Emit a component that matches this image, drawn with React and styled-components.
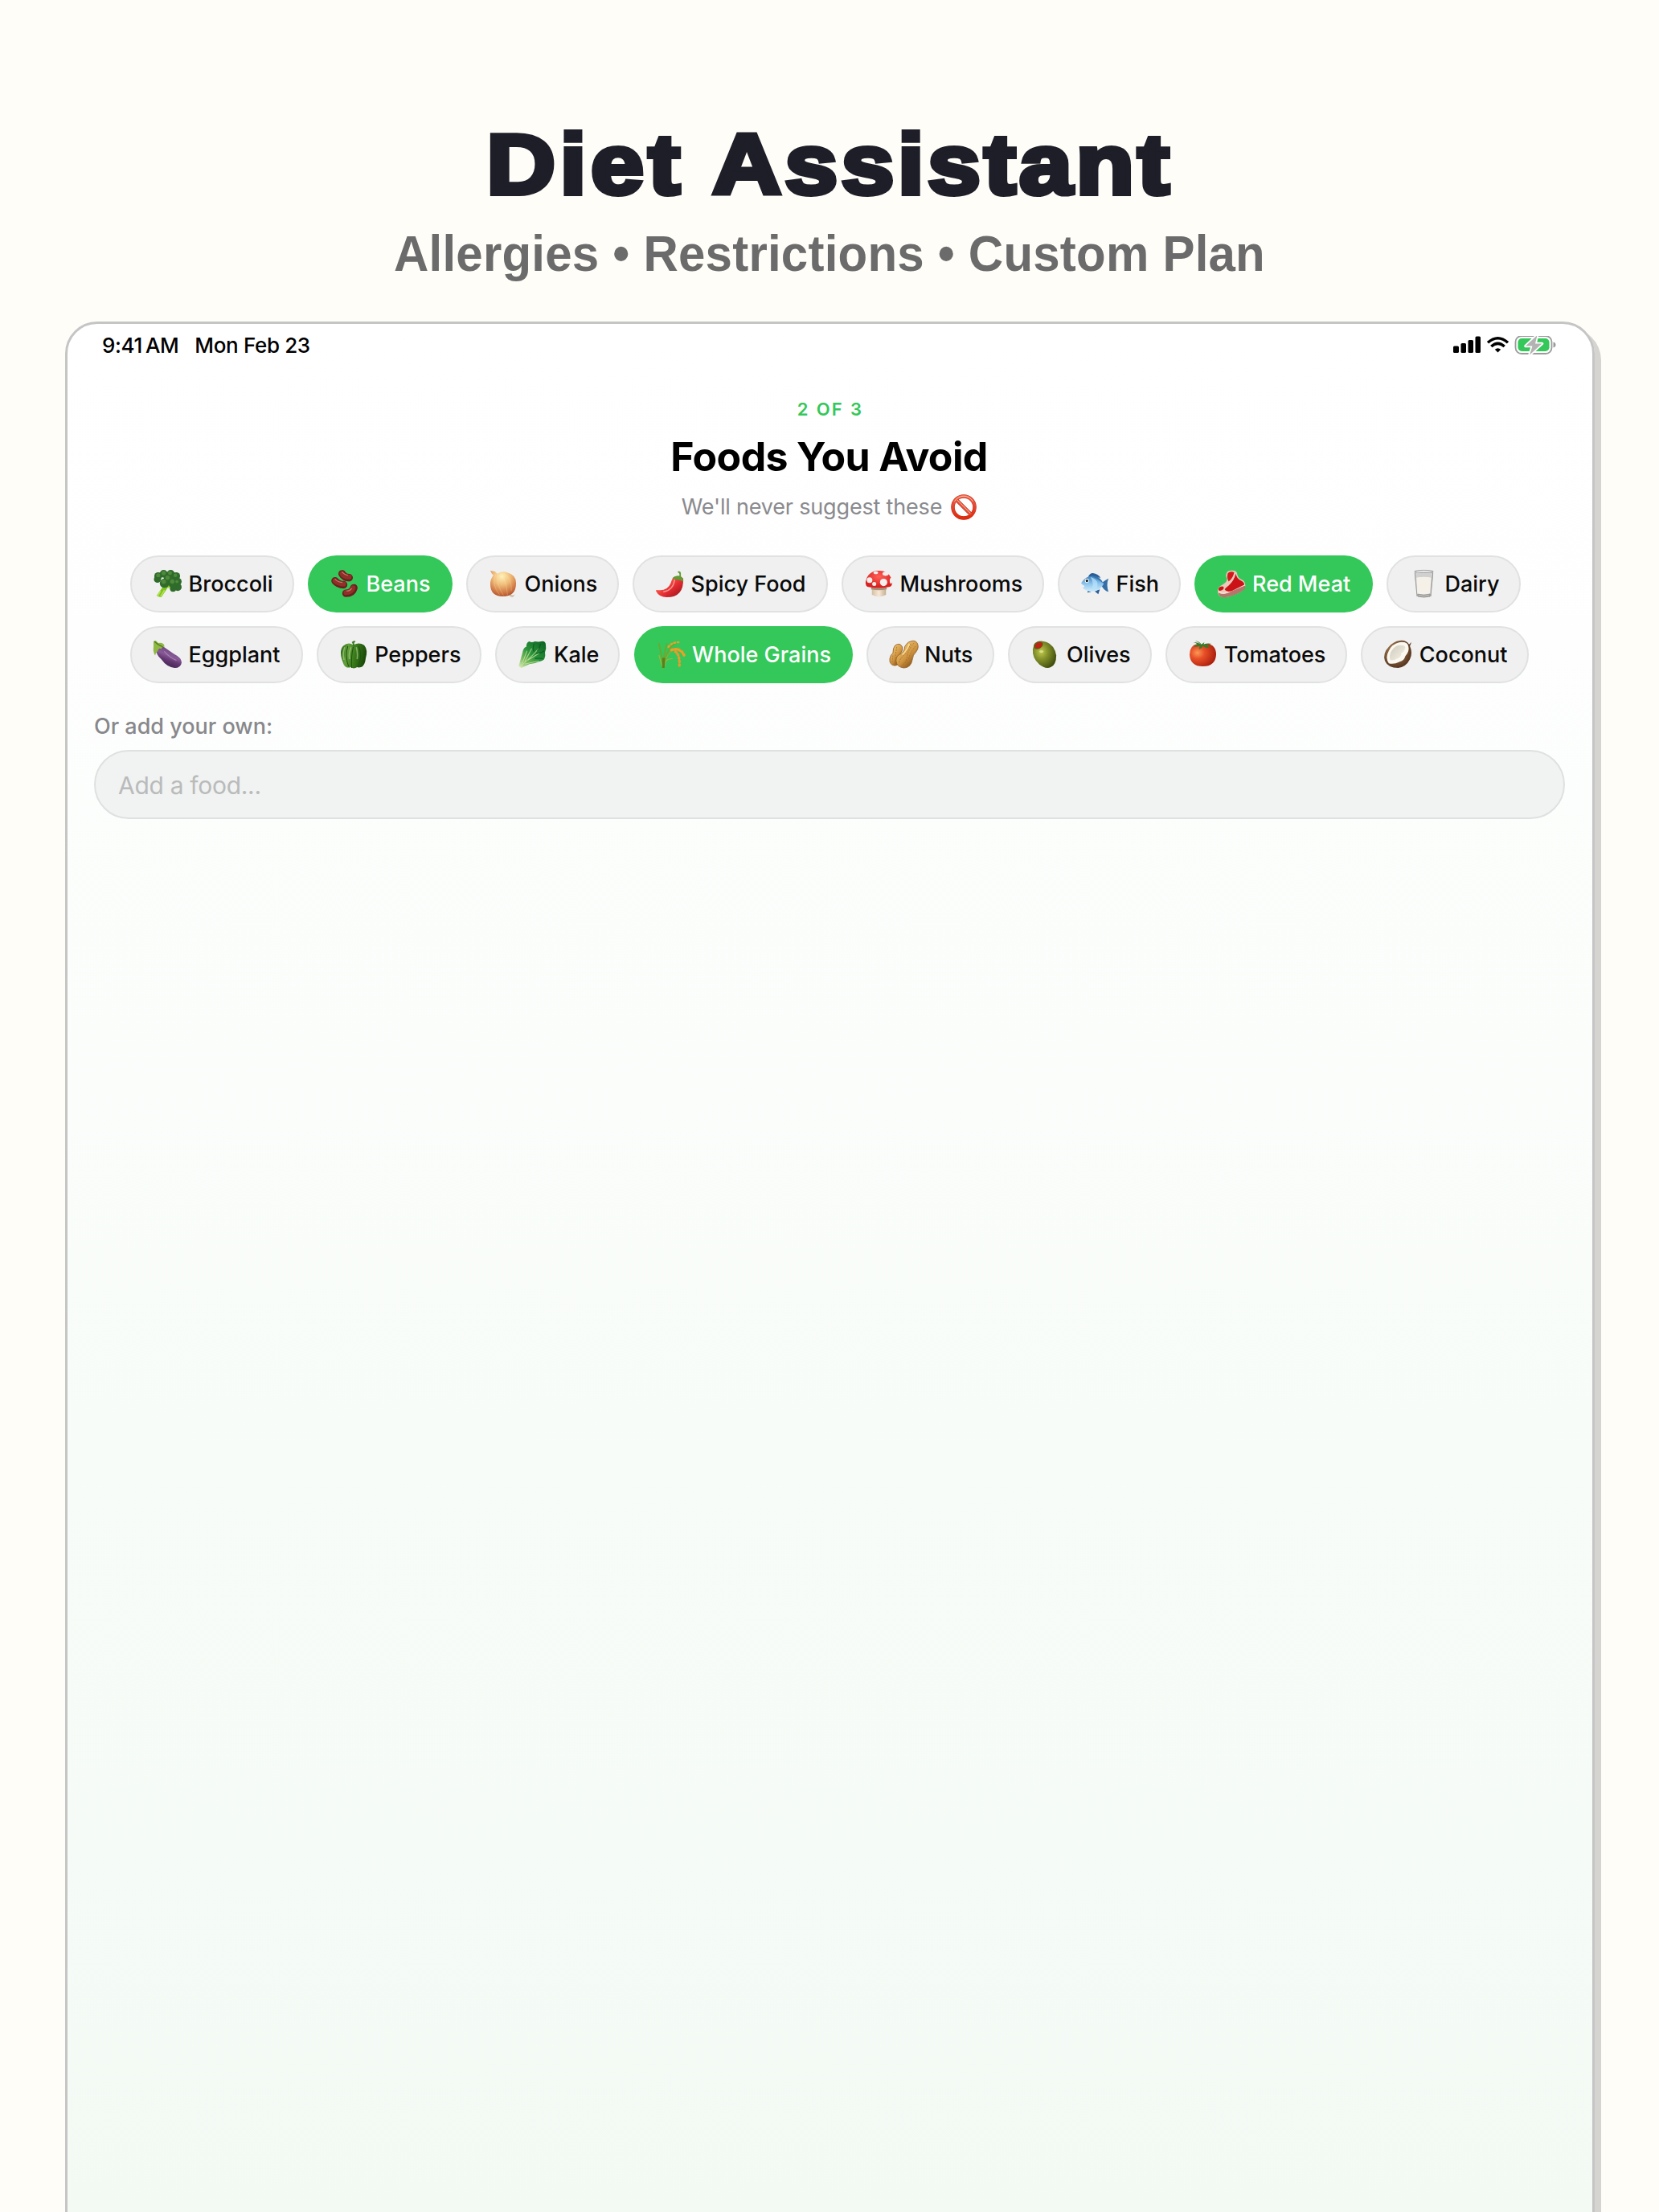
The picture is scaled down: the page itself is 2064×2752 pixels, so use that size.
import React from "react";
import styled, { createGlobalStyle } from "styled-components";

const GlobalStyle = createGlobalStyle`
  * { box-sizing: border-box; }
  html, body { margin: 0; padding: 0; }
  body {
    background: #fffdf8;
    font-family: Inter, "Liberation Sans", sans-serif;
    overflow: hidden;
  }
`;

const Page = styled.main`
  display: flex;
  flex-direction: column;
  align-items: center;
  width: 2064px;
  height: 2752px;
  overflow: hidden;
  background: #fffdf8;
`;

const Hero = styled.header`
  display: flex;
  flex-direction: column;
  align-items: center;
  height: 400px;
  padding-top: 139px;
  flex: none;
`;

const HeroTitle = styled.h1`
  display: flex;
  gap: 31px;
  margin: 0;
  height: 130px;
  font: 700 106px/130px "Liberation Sans", Arial, sans-serif;
  white-space: nowrap;
  color: #1e1e28;
  -webkit-text-stroke: 6px #1e1e28;
  transform: scaleX(1.12);
`;

const HeroWord = styled.span`
  letter-spacing: ${(p) => p.$track}px;
`;

const HeroSubtitle = styled.p`
  margin: 11px 0 0;
  font: 700 60px/72px "Liberation Sans", Arial, sans-serif;
  letter-spacing: 0.22px;
  white-space: nowrap;
  color: #6b6b6b;
  transform: scaleY(1.04);
`;

const Screen = styled.section`
  display: flex;
  flex-direction: column;
  width: 1903px;
  height: 2500px;
  flex: none;
  margin-left: 1px;
  border: 3px solid #c5c5c5;
  border-radius: 40px;
  background: linear-gradient(#ffffff 0, #f3faf4 2349px);
  box-shadow: 8px 8px 0 #d5d4d0;
`;

const StatusBar = styled.div`
  display: flex;
  align-items: center;
  height: 53px;
  padding: 0 45px 0 43px;
`;

const StatusText = styled.span`
  font-size: 26px;
  font-weight: 480;
  line-height: 53px;
  white-space: pre;
  color: #000;
  letter-spacing: ${(p) => p.$track}px;
  margin-right: ${(p) => p.$gap || 0}px;
`;

const StatusIcons = styled.svg`
  margin: 2px 0 0 auto;
  width: 128px;
  height: 26px;
`;

const Heading = styled.div`
  display: flex;
  flex-direction: column;
  align-items: center;
  height: 235px;
  padding-top: 37px;
`;

const Step = styled.div`
  font-size: 22px;
  font-weight: 590;
  line-height: 32px;
  letter-spacing: 2.3px;
  margin-right: -1px;
  color: #34c759;
`;

const Title = styled.h2`
  margin: 13px 2px 0 0;
  font-size: 50px;
  font-weight: 700;
  line-height: 60px;
  letter-spacing: -0.65px;
  color: #000;
`;

const Hint = styled.p`
  display: flex;
  align-items: center;
  gap: 11px;
  margin: 15px 2px 0 0;
  font-size: 27px;
  font-weight: 400;
  line-height: 36px;
  letter-spacing: -0.18px;
  color: #8a8a8e;
`;

const Chips = styled.div`
  display: flex;
  flex-direction: column;
  gap: 18px;
  padding-left: 78px;
`;

const ChipRow = styled.div`
  display: flex;
  gap: ${(p) => p.$gap}px;
  height: 70px;
`;

const Chip = styled.button`
  display: flex;
  align-items: center;
  gap: 8.5px;
  width: ${(p) => p.$width}px;
  height: 71px;
  padding: 0 0 0 ${(p) => (p.$on ? 29 : 27)}px;
  flex: none;
  border: ${(p) => (p.$on ? "0" : "2px solid #e0e1e1")};
  border-radius: 36px;
  background: ${(p) => (p.$on ? "#34c759" : "#f0f0f0")};
  color: ${(p) => (p.$on ? "#fff" : "#0a0a0a")};
  font: 480 27px/36px Inter, "Liberation Sans", sans-serif;
  letter-spacing: 0;
  white-space: nowrap;
`;

const Emoji = styled.svg`
  width: ${(p) => p.$size || 35}px;
  height: ${(p) => p.$size || 35}px;
  flex: none;
  overflow: visible;
`;

const CustomFood = styled.label`
  display: flex;
  flex-direction: column;
  padding: 36px 34px 0 33px;
  font-size: 27px;
  font-weight: 460;
  line-height: 38px;
  color: #88888c;
`;

const LabelText = styled.span`
  letter-spacing: 0;
`;

const FoodInput = styled.input`
  width: 100%;
  height: 86px;
  margin-top: 10px;
  padding: 1px 28px 0;
  border: 2px solid #dfe1e1;
  border-radius: 43px;
  background: #f1f2f2;
  font: 400 30px/40px Inter, "Liberation Sans", sans-serif;
  letter-spacing: -0.3px;
  outline: none;
  &::placeholder { color: #b9bbbb; opacity: 1; }
`;

const art = {
  broccoli: (
    <>
      <path d="M13 20 4 33q3 2 6 2l8-12 8 1-6-8z" fill="#7fc41c" />
      <path d="M9 27 5 34M14 26l-5 8M19 22l6 2" stroke="#b7e35a" strokeWidth="1.6" fill="none" />
      <g fill="#2f6b2b">
        <circle cx="6" cy="8" r="5" /><circle cx="5" cy="12" r="4.5" /><circle cx="13" cy="5" r="5" />
        <circle cx="22" cy="5" r="5" /><circle cx="29" cy="8" r="5" /><circle cx="31" cy="15" r="5" />
        <circle cx="31" cy="22" r="5" /><circle cx="25" cy="24" r="4" /><circle cx="20" cy="12" r="7" />
        <circle cx="14" cy="17" r="6" /><circle cx="25" cy="17" r="6" />
      </g>
      <g fill="#5a9440" opacity=".75">
        <circle cx="6" cy="7" r="2.6" /><circle cx="13" cy="4" r="2.7" /><circle cx="21" cy="4" r="2.5" />
        <circle cx="28" cy="7" r="2.3" /><circle cx="18" cy="10" r="2.8" /><circle cx="13" cy="15" r="3" />
        <circle cx="24" cy="15" r="2.8" /><circle cx="30" cy="15" r="2" />
      </g>
    </>
  ),
  beans: (
    <>
      <g fill="none" stroke="#6b1f1c" strokeWidth="9.6" strokeLinecap="round">
        <path d="M14 5q3 5 9 5" /><path d="M5 14q4 5 11 5" /><path d="M19 30q8 0 10-7" />
      </g>
      <g fill="none" stroke="#8f3029" strokeWidth="6.4" strokeLinecap="round">
        <path d="M14 5q3 4 9 4" /><path d="M5 14q4 4 11 4" /><path d="M19 29q7 0 9-6" />
      </g>
      <g fill="none" stroke="#c9776c" strokeWidth="1.2" strokeLinecap="round">
        <path d="M14 3q3 3 7 4" /><path d="M5 12q4 4 9 4" /><path d="M20 27q4 0 6-3" />
      </g>
    </>
  ),
  onion: (
    <>
      <defs>
        <radialGradient id="onion" cx=".45" cy=".22" r=".85">
          <stop offset="0" stopColor="#fff3b8" /><stop offset=".4" stopColor="#f0ba78" />
          <stop offset=".8" stopColor="#c96d3d" /><stop offset="1" stopColor="#9a4322" />
        </radialGradient>
      </defs>
      <path d="M27 32q4 1 6-1l-3 4q-3 0-5-2z" fill="#cdbfa8" />
      <path d="M1 1 7 2l3 3q5-4 12-2 12 3 12 14 0 17-17 17Q1 34 1 18 1 12 5 7L3 5z" fill="url(#onion)" />
      <path d="M8 5q-6 14 5 27M10 5q-1 14 8 28M13 4q9 9 10 28M17 3q12 8 11 24" stroke="#ffe9b0" strokeWidth=".8" fill="none" opacity=".35" />
    </>
  ),
  chili: (
    <>
      <defs>
        <linearGradient id="chili" x1="0" y1="0" x2="1" y2="1">
          <stop offset=".3" stopColor="#ff5a4e" /><stop offset=".6" stopColor="#e02a30" /><stop offset="1" stopColor="#8f1118" />
        </linearGradient>
      </defs>
      <path d="M22 10q8-5 13 1 1 24-21 24Q4 35 0 27q0-2 3-1 12 1 16-9 1-4 3-7z" fill="url(#chili)" />
      <path d="M24 13q-2 13-14 15" stroke="#ffb0a8" strokeWidth="1.4" strokeLinecap="round" fill="none" opacity=".8" />
      <path d="M28 2q4-1 4 3v4q4 2 3 6l-5-2-5-1-4-1q3-4 9-3 1-4-2-5z" fill="#5f9c34" />
    </>
  ),
  mushroom: (
    <>
      <defs>
        <linearGradient id="stem" x1="0" x2="1">
          <stop offset="0" stopColor="#d4bfa5" /><stop offset=".5" stopColor="#f7e9d7" /><stop offset="1" stopColor="#c6ad91" />
        </linearGradient>
        <radialGradient id="cap" cx=".5" cy=".35" r=".6">
          <stop offset="0" stopColor="#ff6257" /><stop offset="1" stopColor="#d91f1f" />
        </radialGradient>
      </defs>
      <path d="M9 21h18v11q-9 5-18 0z" fill="url(#stem)" />
      <path d="M8 22h20v3q-10 2-20 0z" fill="#a98f78" />
      <path d="M1 15Q4 1 18 1t17 14q1 7-6 7-11 2-23 0-6 0-5-7z" fill="url(#cap)" />
      <g fill="#f3efec">
        <circle cx="6" cy="13" r="3.6" /><circle cx="24" cy="16" r="4.7" /><ellipse cx="26.500" cy="5" rx="4" ry="2.600" />
        <ellipse cx="14" cy="3.500" rx="3" ry="1.800" /><circle cx="12" cy="18" r="2.600" /><ellipse cx="33.500" cy="14" rx="1.700" ry="3.800" />
      </g>
    </>
  ),
  fish: (
    <>
      <defs>
        <linearGradient id="fish" x1="0" y1="0" x2="0" y2="1">
          <stop offset="0" stopColor="#3e7fba" /><stop offset=".5" stopColor="#8cc5ee" /><stop offset="1" stopColor="#d7eefb" />
        </linearGradient>
      </defs>
      <path d="M9 9q2-5 6-5 7 1 10 6zM17 27l5 4 2-6zM9 26l-1 3 5-1z" fill="#2a5f96" />
      <path d="M26 17q5-4 9-6-3 8 0 17-5-1-9-8z" fill="#356ea5" />
      <path d="M0 17Q7 6 18 8q7 2 11 10-5 9-14 10Q6 28 2 23q3-1 2-3-2 0-4-3z" fill="url(#fish)" />
      <path d="M12 9q6 9 0 18 10 0 9-9 0-6-9-9z" fill="#b8e3fa" opacity=".75" />
      <path d="M14 8q10-1 14 9-6-5-14-9z" fill="#2e6fa9" opacity=".8" />
      <circle cx="7.500" cy="14" r="2.600" fill="#fff" /><circle cx="7.500" cy="14" r="1.600" fill="#111" />
    </>
  ),
  meat: (
    <>
      <path d="M11 5q1-4 5-4 9-1 9 5 1 5 7 7 4 3 3 9-3 6-12 9Q9 37 3 34q-3-2-3-8 1-5 6-7 6-3 6-8-2-3-1-6z" fill="#ecc9ba" />
      <path d="M1 29q6 4 15-1 11-5 19-8v4q-6 6-16 9-10 4-16 1-2-2-2-5z" fill="#b4766a" />
      <path d="M1 28q6 4 15-1 11-5 19-8" fill="none" stroke="#f7dfd3" strokeWidth="1.500" />
      <path d="M13 4q3-3 8-1-1 7-7 12-3-6-1-11z" fill="#d3181b" />
      <path d="M23 5q1 6 7 9 4 2 4 5-8 4-16 8-7 2-9-2 1-2 5-5 7-6 9-15z" fill="#cb1216" />
      <path d="M1 24q1-3 5-3 3 1 1 4-4 3-6 1z" fill="#c91517" />
    </>
  ),
  milk: (
    <>
      <defs>
        <linearGradient id="glass" x1="0" x2="1">
          <stop offset="0" stopColor="#aaaaa8" /><stop offset=".18" stopColor="#f6f5f1" />
          <stop offset=".75" stopColor="#eeece6" /><stop offset="1" stopColor="#a3a3a2" />
        </linearGradient>
      </defs>
      <path d="M6 2h24l-3 32q-9 3-18 0z" fill="url(#glass)" />
      <path d="M7 4h22l-.5 6h-21z" fill="#cfd0cf" />
      <ellipse cx="18" cy="2" rx="12" ry="1.600" fill="#e6e6e6" stroke="#8f9090" strokeWidth=".8" />
      <path d="M8.500 10q9.500-2 19 0l-2 20h-15z" fill="#f5f1e8" />
      <path d="M10 31q8 2 16 0l-.3 3q-8 2-15.400 0z" fill="#b7b8b6" stroke="#777" strokeWidth=".7" />
      <path d="m6.500 4 2.800 30M29.500 4l-2.800 30" stroke="#989997" strokeWidth="1" />
    </>
  ),
  eggplant: (
    <>
      <defs>
        <linearGradient id="eggplant" x1=".75" y1="0" x2=".3" y2="1">
          <stop offset=".1" stopColor="#65407a" /><stop offset=".45" stopColor="#885a97" />
          <stop offset=".65" stopColor="#633772" /><stop offset="1" stopColor="#381f47" />
        </linearGradient>
      </defs>
      <path d="M3 10q5-6 10-2l13 9q10 5 10 11-1 7-9 7-10-1-17-11-7-6-7-14z" fill="url(#eggplant)" />
      <path d="M14 14q8 9 15 11" stroke="#c49fce" strokeWidth="1.300" strokeLinecap="round" fill="none" opacity=".55" />
      <path d="M0 1 3 0l3 3q8-1 8 5-4 0-4 3-3-3-5 3-2 1-3 5-3-5-2-11z" fill="#8fb944" />
      <path d="m1 1 5 4 6 3" stroke="#547c22" strokeWidth="1.500" fill="none" />
    </>
  ),
  pepper: (
    <>
      <defs>
        <linearGradient id="pepper" x1="0" y1="0" x2="1" y2=".2">
          <stop offset="0" stopColor="#25610f" /><stop offset=".3" stopColor="#65a03c" />
          <stop offset=".6" stopColor="#3b7c1b" /><stop offset="1" stopColor="#1c4c0b" />
        </linearGradient>
      </defs>
      <path d="M4 7q7-6 13-1 7-5 14 0 5 6 2 16-1 10-6 12-3 1-5 0-5 3-8 0-6 2-9-3-4-9-4-15 0-6 3-9z" fill="url(#pepper)" />
      <path d="M10 7Q6 20 11 33M17 8q-3 12-2 27M24 7q5 13-1 27" stroke="#1d560e" strokeWidth="1.100" fill="none" />
      <path d="M6 9q-3 7-1 15M14 9q-3 8-2 14M21 9q2 8 1 14" stroke="#b3d896" strokeWidth="1.700" strokeLinecap="round" fill="none" opacity=".6" />
      <path d="M16 8q1-4-1-6 3-3 5-1l-2 2q0 3 3 5z" fill="#3c7a26" />
    </>
  ),
  kale: (
    <>
      <defs>
        <linearGradient id="kale" x1="1" y1="0" x2="0" y2="1">
          <stop offset="0" stopColor="#08601f" /><stop offset=".5" stopColor="#2a933b" /><stop offset=".75" stopColor="#7dbb62" /><stop offset="1" stopColor="#e9f2c9" />
        </linearGradient>
      </defs>
      <path d="m1 30 4-14q1-7 5-8 0-6 4-7 3 2 7 0 5 1 8 0 6-1 6 5 1 5-1 9 1 5-1 9-3 3-7 3-6 3-12 3L4 35q-2 0-4-3z" fill="url(#kale)" />
      <path d="M2 33Q15 23 26 10M5 29l6-16M8 27l9-17M12 25l15-9M8 30l18-4" stroke="#c6e59e" strokeWidth="1.100" fill="none" opacity=".8" />
      <path d="M20 4q-2 6 0 10M28 4q0 5-4 9M33 13q-5 4-10 3M31 23q-5-1-10 0" stroke="#064c18" strokeWidth="1.300" fill="none" opacity=".6" />
    </>
  ),
  grain: (
    <>
      <g fill="none" strokeLinecap="round">
        <path d="M7 35Q6 20 2 4M7 35Q8 16 12 4M8 34Q10 13 22 4" stroke="#75a52a" strokeWidth="1.700" />
        <path d="M7 35Q4 27 2 19M9 33q0-10 10-10" stroke="#96b83d" strokeWidth="1.300" />
        <path d="M9 28Q14 12 27 9" stroke="#9aa936" strokeWidth="1.300" />
        <path d="M14 8Q19 2 27 2" stroke="#e7a12f" strokeWidth="2.600" strokeDasharray="1.500 3" />
        <path d="M18 12q12-4 17 9" stroke="#ee9f26" strokeWidth="3.600" strokeDasharray="1.500 3" />
        <path d="M23 14q6 5 5 18" stroke="#e59c2d" strokeWidth="3.400" strokeDasharray="1.500 3" />
      </g>
      <path d="M6 22h4l-1 13H6z" fill="#56821c" />
    </>
  ),
  peanut: (
    <>
      <defs>
        <linearGradient id="nut" x1=".1" y1=".1" x2=".8" y2="1">
          <stop offset="0" stopColor="#f3cd7e" /><stop offset=".55" stopColor="#cf9440" /><stop offset="1" stopColor="#74420f" />
        </linearGradient>
      </defs>
      <path d="M7 6q6-4 9 2 1 5-2 8-2 4 0 9-3 7-8 7-7-1-6-9 1-5 4-7 0-7 3-10z" fill="url(#nut)" stroke="#8c581c" strokeWidth=".8" />
      <path d="M24 2q8-4 11 1 3 5-1 11-5 5-5 10-2 11-11 11-9-1-10-9 0-7 6-9 5-3 5-9 2-4 5-6z" fill="url(#nut)" stroke="#8c581c" strokeWidth=".8" />
      <path d="M31 3Q22 14 22 22q-1 7-7 10M27 4q-4 9-9 15-5 4-6 9M33 7q-7 8-9 17M4 19l-1 9M9 8l-2 12v10" stroke="#9b6424" strokeWidth="1" strokeDasharray="2 1.300" fill="none" opacity=".7" />
      <path d="M25 4q-3 9-9 14" stroke="#ffe29b" strokeWidth="1.800" fill="none" opacity=".8" />
    </>
  ),
  olive: (
    <>
      <defs>
        <radialGradient id="olive" cx=".36" cy=".4" r=".7">
          <stop offset="0" stopColor="#c0c94a" /><stop offset=".4" stopColor="#85922b" /><stop offset="1" stopColor="#3e4b0d" />
        </radialGradient>
      </defs>
      <path d="M4 4q6-6 16-2 10 4 12 17 0 12-7 15-7 3-15-4Q1 22 2 11z" fill="url(#olive)" />
      <ellipse cx="9" cy="6" rx="6.400" ry="4.600" transform="rotate(-30 9 6)" fill="#5b6618" />
      <ellipse cx="9.500" cy="6" rx="5.200" ry="3.600" transform="rotate(-30 9.500 6)" fill="#bb2414" />
      <ellipse cx="13" cy="14" rx="2.800" ry="1.700" fill="#e7edaa" opacity=".65" />
    </>
  ),
  tomato: (
    <>
      <defs>
        <radialGradient id="tomato" cx=".3" cy=".4" r=".75">
          <stop offset="0" stopColor="#f99a57" /><stop offset=".35" stopColor="#e95028" /><stop offset="1" stopColor="#a51a0b" />
        </radialGradient>
      </defs>
      <path d="M11 4q6 2 12 0 12 1 12 14-1 15-17 15T1 18Q1 6 11 4z" fill="url(#tomato)" />
      <path d="M17 6q-4-4-11-4 4 1 5 3-3 0-5 3 5 0 8-1l-1 4q4-1 5-4 4 3 8 2-2-2-3-3 3-1 6-2-6-1-10 1l1-3-4 3Q14 1 8 0q5 2 9 6z" fill="#3b792a" />
    </>
  ),
  coconut: (
    <>
      <defs>
        <radialGradient id="shell" cx=".4" cy=".4" r=".65">
          <stop offset="0" stopColor="#b38a62" /><stop offset="1" stopColor="#50301a" />
        </radialGradient>
        <linearGradient id="flesh" x1="0" y1="0" x2="1" y2="1">
          <stop offset="0" stopColor="#d0cabd" /><stop offset="1" stopColor="#f5f2e7" />
        </linearGradient>
      </defs>
      <path d="M20 0q8-1 12 5l3-3-2 5q4 9 0 17-5 10-15 11Q5 35 1 26-2 16 6 8q6-7 14-8z" fill="url(#shell)" />
      <path d="M20 2q10-1 11 5 2 7-4 13-1 5-7 7-8 4-14 2-5-7 0-16Q10 4 20 2z" fill="#fbf8ef" />
      <path d="M19 6q8-1 8 3-1 5-5 7 0 5-5 7-5 3-9 2-2-5 1-11 4-7 10-8z" fill="url(#flesh)" />
    </>
  ),
  prohibited: (
    <>
      <defs>
        <linearGradient id="ban" x1="0" y1="0" x2="0" y2="1">
          <stop offset="0" stopColor="#f0654c" /><stop offset=".5" stopColor="#e2452f" /><stop offset="1" stopColor="#e52a0b" />
        </linearGradient>
      </defs>
      <circle cx="18" cy="18" r="15.200" fill="none" stroke="#b9260f" strokeWidth="5" />
      <path d="m8 8 20 20" stroke="#b9260f" strokeWidth="5" />
      <circle cx="18" cy="18" r="15.200" fill="none" stroke="url(#ban)" strokeWidth="4" />
      <path d="m8 8 20 20" stroke="#e5573f" strokeWidth="3.800" />
      <path d="M5 10Q10 2.500 18 2.500T31 10M9 8l18 18" fill="none" stroke="#ffc0b0" strokeWidth="1" />
    </>
  ),
};

const rows = [
  {
    gap: 17,
    foods: [
      ["Broccoli", "broccoli", 204], ["Beans", "beans", 180, true], ["Onions", "onion", 190],
      ["Spicy Food", "chili", 243], ["Mushrooms", "mushroom", 252], ["Fish", "fish", 152.5],
      ["Red Meat", "meat", 222.5, true], ["Dairy", "milk", 167],
    ],
  },
  {
    gap: 17.2,
    foods: [
      ["Eggplant", "eggplant", 214.5], ["Peppers", "pepper", 205.5], ["Kale", "kale", 155],
      ["Whole Grains", "grain", 272, true], ["Nuts", "peanut", 159.5], ["Olives", "olive", 178.5],
      ["Tomatoes", "tomato", 226], ["Coconut", "coconut", 209],
    ],
  },
];

function DeviceStatus() {
  return (
    <StatusIcons viewBox="0 0 128 26">
      <g fill="#000">
        <rect x="0" y="12.500" width="7" height="8.500" rx="1.600" />
        <rect x="9.500" y="9" width="6.500" height="12" rx="1.600" />
        <rect x="18.500" y="5" width="6.500" height="16" rx="1.600" />
        <rect x="27.500" y=".5" width="6.500" height="20.500" rx="1.600" />
        <path d="m55.500 20.500-3.700-3.800q3.700-3 7.400 0z" />
      </g>
      <g fill="none" stroke="#000" strokeWidth="3.500">
        <path d="M43 8.300q12.500-11 25 0" />
        <path d="M47.300 13q8.200-7.400 16.400 0" />
      </g>
      <rect x="77.500" y="0" width="45" height="22" rx="7.500" fill="#fff" stroke="#9b9b9b" strokeWidth="1.800" />
      <rect x="80.500" y="3" width="39" height="16" rx="4.800" fill="#34c759" />
      <path d="M124.500 7.500q3 .8 3 3.500t-3 3.500z" fill="#9b9b9b" />
      <path d="M104.500-1 90 12.500h8.500L95 23.500l15.500-14H102z" fill="#b3b3b3" stroke="#fff" strokeWidth="3.600" paintOrder="stroke" strokeLinejoin="round" />
    </StatusIcons>
  );
}

export default function App() {
  return (
    <>
      <GlobalStyle />
      <Page>
        <Hero>
          <HeroTitle>
            <HeroWord $track={4.9}>Diet</HeroWord>
            <HeroWord $track={3.8}>Assistant</HeroWord>
          </HeroTitle>
          <HeroSubtitle>Allergies • Restrictions • Custom Plan</HeroSubtitle>
        </Hero>
        <Screen>
          <StatusBar>
            <StatusText $track={-0.4} $gap={20}>9:41{"\u2009"}AM</StatusText>
            <StatusText $track={-0.35}>Mon Feb 23</StatusText>
            <DeviceStatus />
          </StatusBar>
          <Heading>
            <Step>2 OF 3</Step>
            <Title>Foods You Avoid</Title>
            <Hint>
              We'll never suggest these
              <Emoji $size={32} viewBox="0 0 36 36">{art.prohibited}</Emoji>
            </Hint>
          </Heading>
          <Chips>
            {rows.map((row) => (
              <ChipRow key={row.foods[0][0]} $gap={row.gap}>
                {row.foods.map(([name, icon, width, on]) => (
                  <Chip key={name} type="button" $width={width} $on={on}>
                    <Emoji viewBox="0 0 36 36">{art[icon]}</Emoji>
                    {name}
                  </Chip>
                ))}
              </ChipRow>
            ))}
          </Chips>
          <CustomFood>
            <LabelText>Or add your own:</LabelText>
            <FoodInput type="text" placeholder="Add a food..." />
          </CustomFood>
        </Screen>
      </Page>
    </>
  );
}
